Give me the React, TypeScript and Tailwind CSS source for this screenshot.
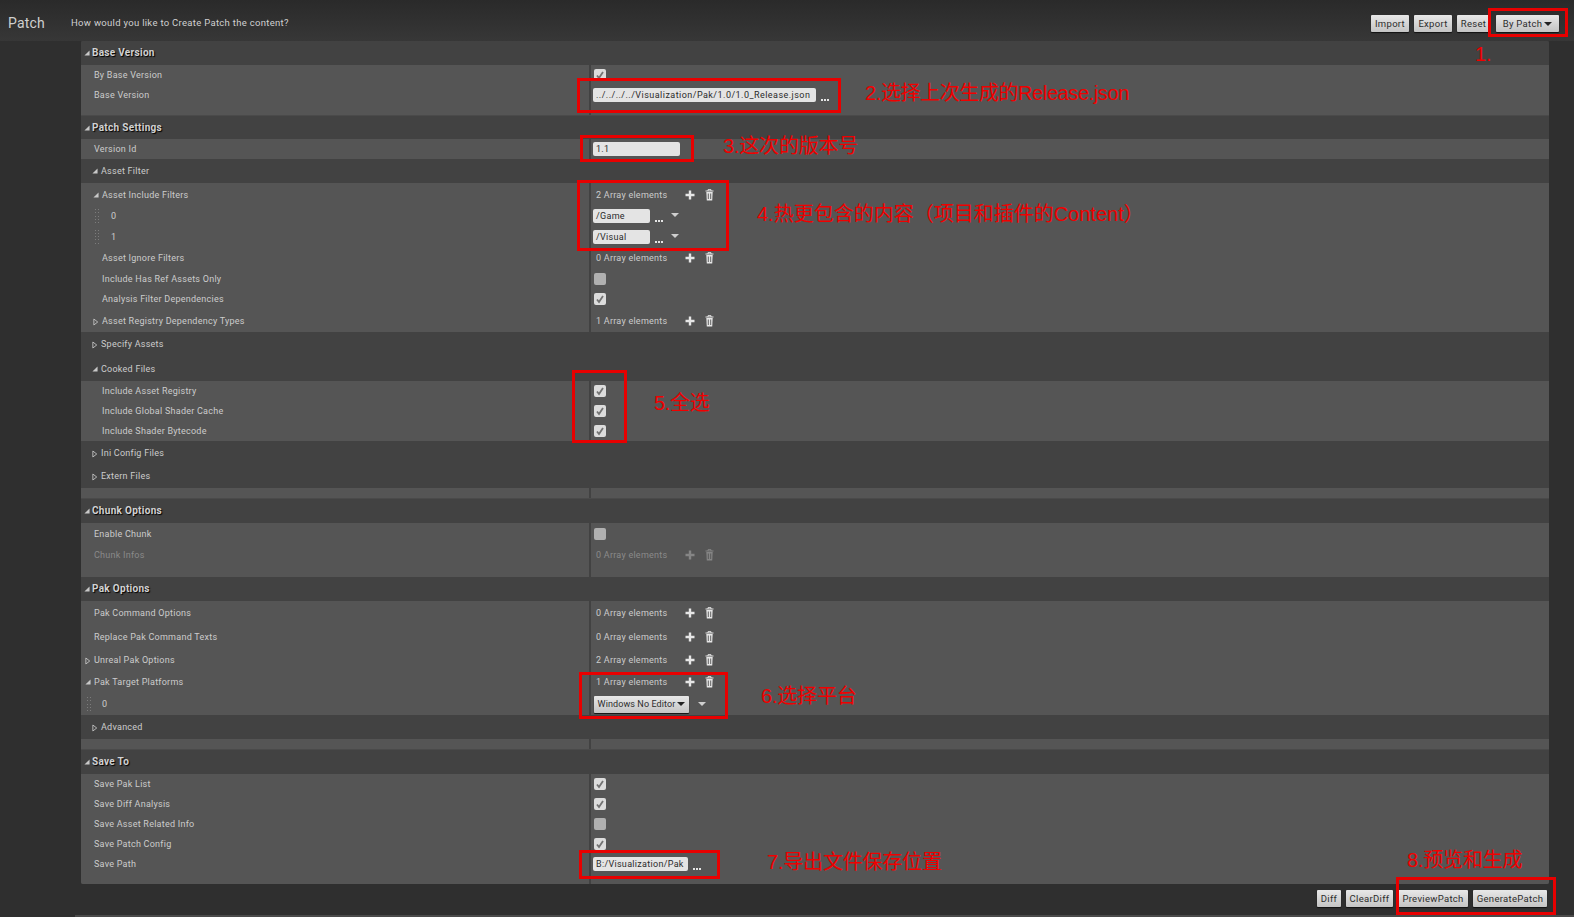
import React from "react";

const Arrow = ({ open, className = "" }: { open?: boolean; className?: string }) => (
  <svg width="6" height="8" viewBox="0 0 7 8" className={`shrink-0 ${open ? "" : "translate-y-[1px]"} ${className}`}>
    {open ? (
      <path d="M6.5 1 L6.5 7 L0.5 7 Z" fill="#c8c8c8" />
    ) : (
      <path d="M1 0.5 L5.5 4 L1 7.5 Z" fill="none" stroke="#c8c8c8" strokeWidth="1" />
    )}
  </svg>
);

const Label = ({ children, dim }: { children: React.ReactNode; dim?: boolean }) => (
  <span className={`block text-[9px] leading-[12px] tracking-[0.25px] whitespace-nowrap ${dim ? "text-[#8a8a8a]" : "text-[#cccccc]"}`}>
    {children}
  </span>
);

const Check = ({ on = true }: { on?: boolean }) => (
  <div className={`ml-[1px] w-[12px] h-[12px] rounded-[2px] flex items-center justify-center ${on ? "bg-[#dcdcdc]" : "bg-[#b0b0b0]"}`}>
    {on && (
      <svg width="10" height="10" viewBox="0 0 10 10">
        <path d="M2 5.5 L4 8 L8 2" fill="none" stroke="#727272" strokeWidth="1.8" />
      </svg>
    )}
  </div>
);

const Input = ({ value, className }: { value: string; className: string }) => (
  <div className={`h-[14px] rounded-[2px] bg-[#e4e4e4] pl-[3px] flex items-center text-[9px] leading-[14px] text-[#2a2a2a] whitespace-nowrap overflow-hidden ${className}`}>
    {value}
  </div>
);

const Dots = ({ className = "" }: { className?: string }) => (
  <div className={`flex gap-[1px] self-end mb-[4px] ${className}`}>
    <i className="w-[2px] h-[2px] bg-[#e4e4e4]" />
    <i className="w-[2px] h-[2px] bg-[#e4e4e4]" />
    <i className="w-[2px] h-[2px] bg-[#e4e4e4]" />
  </div>
);

const Caret = ({ className = "" }: { className?: string }) => (
  <svg width="8" height="4" viewBox="0 0 8 4" className={className}>
    <path d="M0 0 H8 L4 4 Z" fill="#cfcfcf" />
  </svg>
);

const ArrayControls = ({ count, dim }: { count: number; dim?: boolean }) => {
  const color = dim ? "#858585" : "#e6e6e6";
  return (
    <div className="flex items-center pl-[3px]">
      <div className="w-[89px]">
        <Label dim={dim}>{count} Array elements</Label>
      </div>
      <svg width="10" height="10" viewBox="0 0 10 10">
        <path d="M5 0.5 V9.5 M0.5 5 H9.5" stroke={color} strokeWidth="2.4" />
      </svg>
      <svg width="9" height="12" viewBox="0 0 9 12" className="ml-[10px]">
        <path d="M0.5 2 H8.5 M3 2 V0.7 H6 V2" fill="none" stroke={color} strokeWidth="1" />
        <path d="M1.3 3 H7.7 L7.2 11.4 H1.8 Z" fill={color} />
        <path d="M3.3 4.5 V10 M5.7 4.5 V10" stroke="#555555" strokeWidth="0.9" />
      </svg>
    </div>
  );
};

const Grip = ({ className = "" }: { className?: string }) => (
  <div className={`w-[5px] h-[14px] grid grid-cols-2 content-between ${className}`}>
    {Array.from({ length: 10 }).map((_, i) => (
      <i key={i} className="w-[1px] h-[1px] bg-[#7c7c7c]" />
    ))}
  </div>
);

const Row = ({
  h,
  dark,
  pl,
  left,
  children,
}: {
  h: string;
  dark?: boolean;
  pl: string;
  left: React.ReactNode;
  children?: React.ReactNode;
}) => (
  <div className={`flex ${h} ${dark ? "bg-[#424242]" : "bg-[#555555]"}`}>
    <div className={`w-[510px] shrink-0 flex items-center border-r-2 border-[#424242] ${pl}`}>{left}</div>
    <div className="flex-1 flex items-center pl-[2px]">{children}</div>
  </div>
);

const Header = ({ title, h = "h-[24px]" }: { title: string; h?: string }) => (
  <Row
    h={h}
    dark
    pl="pl-[3px]"
    left={
      <>
        <Arrow open />
        <span className="ml-[2px] text-[10px] leading-[12px] font-bold tracking-[0.3px] text-[#d2d2d2] [text-shadow:1px_1px_1px_#000]">
          {title}
        </span>
      </>
    }
  />
);

const Sub = ({ title, open, h = "h-[24px]" }: { title: string; open?: boolean; h?: string }) => (
  <Row
    h={h}
    dark
    pl="pl-[11px]"
    left={
      <>
        <Arrow open={open} />
        <span className="ml-[3px]">
          <Label>{title}</Label>
        </span>
      </>
    }
  />
);

const Pad = ({ h }: { h: string }) => (
  <div className={`flex ${h} bg-[#555555]`}>
    <div className="w-[510px] shrink-0 border-r-2 border-[#424242]" />
  </div>
);

const Note = ({ className, children }: { className: string; children: string }) => (
  <div className={`absolute z-20 text-[20px] leading-[24px] text-[#f00000] whitespace-nowrap font-['Liberation_Sans','Noto_Sans_CJK_SC',sans-serif] ${className}`}>
    {children}
  </div>
);

const RedBox = ({ className }: { className: string }) => (
  <div className={`absolute z-10 border-[3px] border-[#e80000] ${className}`} />
);

const Btn = ({ children, className = "" }: { children: React.ReactNode; className?: string }) => (
  <div className={`h-[17px] rounded-[1px] bg-gradient-to-b from-[#e8e8e8] to-[#c4c4c4] flex items-center justify-center text-[9.5px] leading-[14px] tracking-[0.3px] text-[#2c2c2c] whitespace-nowrap shadow-[0_1px_1px_#111] ${className}`}>
    {children}
  </div>
);

export default function App() {
  return (
    <div className="relative w-[1574px] h-[917px] overflow-hidden bg-[#2f2f2f] font-['Roboto',sans-serif]">
      {/* top bar */}
      <div className="h-[41px] flex items-center bg-gradient-to-b from-[#2a2a2a] to-[#373737] pt-[6px]">
        <span className="ml-[8px] w-[63px] text-[14px] tracking-[0.2px] text-[#cfcfcf]">Patch</span>
        <span className="text-[9.5px] tracking-[0.3px] text-[#d0d0d0]">How would you like to Create Patch the content?</span>
        <div className="ml-auto mr-[15px] flex gap-[5px]">
          <Btn className="w-[38px]">Import</Btn>
          <Btn className="w-[38px]">Export</Btn>
          <Btn className="w-[33px]">Reset</Btn>
          <Btn className="w-[63px] ml-[1px]">
            By Patch
            <Caret className="ml-[2px] [&_path]:fill-[#222]" />
          </Btn>
        </div>
      </div>

      <div className="ml-[81px] w-[1468px] flex flex-col gap-[1px] bg-[#4a4a4a] rounded-[2px]">
        <section className="rounded-t-[2px] overflow-hidden">
          <Header title="Base Version" />
          <Row h="h-[20px]" pl="pl-[13px]" left={<Label>By Base Version</Label>}>
            <Check />
          </Row>
          <Row h="h-[20px]" pl="pl-[13px]" left={<Label>Base Version</Label>}>
            <Input value="../../../../Visualization/Pak/1.0/1.0_Release.json" className="w-[223px] tracking-[0.46px]" />
            <Dots className="ml-[5px]" />
          </Row>
          <Pad h="h-[10px]" />
        </section>

        <section>
          <Header title="Patch Settings" h="h-[23px]" />
          <Row h="h-[20px]" pl="pl-[13px]" left={<Label>Version Id</Label>}>
            <Input value="1.1" className="w-[87px] tracking-[0.3px]" />
          </Row>
          <Sub title="Asset Filter" open />
          <Row
            h="h-[23px]"
            pl="pl-[12px]"
            left={
              <>
                <Arrow open />
                <span className="ml-[3px]">
                  <Label>Asset Include Filters</Label>
                </span>
              </>
            }
          >
            <ArrayControls count={2} />
          </Row>
          <Row h="h-[20px]" pl="pl-[14px]" left={<><Grip /><span className="ml-[11px]"><Label>0</Label></span></>}>
            <Input value="/Game" className="w-[57px] tracking-[0.3px]" />
            <Dots className="ml-[5px]" />
            <Caret className="ml-[8px] mb-[2px]" />
          </Row>
          <Row h="h-[21px]" pl="pl-[14px]" left={<><Grip /><span className="ml-[11px]"><Label>1</Label></span></>}>
            <Input value="/Visual" className="w-[57px] tracking-[0.3px]" />
            <Dots className="ml-[5px]" />
            <Caret className="ml-[8px] mb-[2px]" />
          </Row>
          <Row h="h-[22px]" pl="pl-[21px]" left={<Label>Asset Ignore Filters</Label>}>
            <ArrayControls count={0} />
          </Row>
          <Row h="h-[20px]" pl="pl-[21px]" left={<Label>Include Has Ref Assets Only</Label>}>
            <Check on={false} />
          </Row>
          <Row h="h-[20px]" pl="pl-[21px]" left={<Label>Analysis Filter Dependencies</Label>}>
            <Check />
          </Row>
          <Row
            h="h-[23px]"
            pl="pl-[12px]"
            left={
              <>
                <Arrow />
                <span className="ml-[3px]">
                  <Label>Asset Registry Dependency Types</Label>
                </span>
              </>
            }
          >
            <ArrayControls count={1} />
          </Row>
          <Sub title="Specify Assets" />
          <Sub title="Cooked Files" open h="h-[25px]" />
          <Row h="h-[20px]" pl="pl-[21px]" left={<Label>Include Asset Registry</Label>}>
            <Check />
          </Row>
          <Row h="h-[20px]" pl="pl-[21px]" left={<Label>Include Global Shader Cache</Label>}>
            <Check />
          </Row>
          <Row h="h-[20px]" pl="pl-[21px]" left={<Label>Include Shader Bytecode</Label>}>
            <Check />
          </Row>
          <Sub title="Ini Config Files" h="h-[23px]" />
          <Sub title="Extern Files" />
          <Pad h="h-[10px]" />
        </section>

        <section>
          <Header title="Chunk Options" />
          <Row h="h-[21px]" pl="pl-[13px]" left={<Label>Enable Chunk</Label>}>
            <Check on={false} />
          </Row>
          <Row h="h-[22px]" pl="pl-[13px]" left={<Label dim>Chunk Infos</Label>}>
            <ArrayControls count={0} dim />
          </Row>
          <Pad h="h-[11px]" />
        </section>

        <section className="-mt-[1px]">
          <Header title="Pak Options" />
          <Row h="h-[24px]" pl="pl-[13px]" left={<Label>Pak Command Options</Label>}>
            <ArrayControls count={0} />
          </Row>
          <Row h="h-[23px]" pl="pl-[13px]" left={<Label>Replace Pak Command Texts</Label>}>
            <ArrayControls count={0} />
          </Row>
          <Row
            h="h-[23px]"
            pl="pl-[4px]"
            left={
              <>
                <Arrow />
                <span className="ml-[3px]">
                  <Label>Unreal Pak Options</Label>
                </span>
              </>
            }
          >
            <ArrayControls count={2} />
          </Row>
          <Row
            h="h-[22px]"
            pl="pl-[4px]"
            left={
              <>
                <Arrow open />
                <span className="ml-[3px]">
                  <Label>Pak Target Platforms</Label>
                </span>
              </>
            }
          >
            <ArrayControls count={1} />
          </Row>
          <Row h="h-[22px]" pl="pl-[6px]" left={<><Grip /><span className="ml-[10px]"><Label>0</Label></span></>}>
            <Btn className="w-[95px] h-[16px] ml-[1px]">
              <span className="text-[9px] tracking-[0.1px]">Windows No Editor</span>
              <Caret className="ml-[2px] [&_path]:fill-[#222]" />
            </Btn>
            <Caret className="ml-[9px]" />
          </Row>
          <Sub title="Advanced" />
          <Pad h="h-[10px]" />
        </section>

        <section className="rounded-b-[2px] overflow-hidden">
          <Header title="Save To" />
          <Row h="h-[20px]" pl="pl-[13px]" left={<Label>Save Pak List</Label>}>
            <Check />
          </Row>
          <Row h="h-[20px]" pl="pl-[13px]" left={<Label>Save Diff Analysis</Label>}>
            <Check />
          </Row>
          <Row h="h-[20px]" pl="pl-[13px]" left={<Label>Save Asset Related Info</Label>}>
            <Check on={false} />
          </Row>
          <Row h="h-[20px]" pl="pl-[13px]" left={<Label>Save Patch Config</Label>}>
            <Check />
          </Row>
          <Row h="h-[20px]" pl="pl-[13px]" left={<Label>Save Path</Label>}>
            <Input value="B:/Visualization/Pak" className="w-[95px] tracking-[0.3px]" />
            <Dots className="ml-[5px]" />
          </Row>
          <Pad h="h-[10px]" />
        </section>
      </div>

      {/* bottom buttons */}
      <div className="mt-[6px] mr-[27px] flex justify-end gap-[5px]">
        <Btn className="w-[24px]">Diff</Btn>
        <Btn className="w-[47px]">ClearDiff</Btn>
        <Btn className="w-[70px]">PreviewPatch</Btn>
        <Btn className="w-[74px]">GeneratePatch</Btn>
      </div>
      <div className="mt-[8px] ml-[75px] h-[2px] bg-[#4a4a4a]" />

      {/* annotations */}
      <RedBox className="left-[1488px] top-[8px] w-[80px] h-[29px]" />
      <RedBox className="left-[577px] top-[78px] w-[264px] h-[35px]" />
      <RedBox className="left-[580px] top-[135px] w-[114px] h-[27px]" />
      <RedBox className="left-[577px] top-[180px] w-[152px] h-[71px]" />
      <RedBox className="left-[572px] top-[370px] w-[55px] h-[73px]" />
      <RedBox className="left-[579px] top-[672px] w-[149px] h-[47px]" />
      <RedBox className="left-[579px] top-[850px] w-[141px] h-[29px]" />
      <RedBox className="left-[1396px] top-[877px] w-[160px] h-[38px]" />

      <Note className="left-[1475px] top-[42px]">1.</Note>
      <Note className="left-[865px] top-[81px] tracking-[-0.4px]">2.选择上次生成的Release.json</Note>
      <Note className="left-[723px] top-[134px] tracking-[-0.2px]">3.这次的版本号</Note>
      <Note className="left-[757px] top-[202px]">4.热更包含的内容（项目和插件的Content）</Note>
      <Note className="left-[654px] top-[391px] tracking-[-0.3px]">5.全选</Note>
      <Note className="left-[761px] top-[684px] tracking-[-0.2px]">6.选择平台</Note>
      <Note className="left-[767px] top-[850px] tracking-[-0.2px]">7.导出文件保存位置</Note>
      <Note className="left-[1407px] top-[848px] tracking-[-0.2px]">8.预览和生成</Note>
    </div>
  );
}
